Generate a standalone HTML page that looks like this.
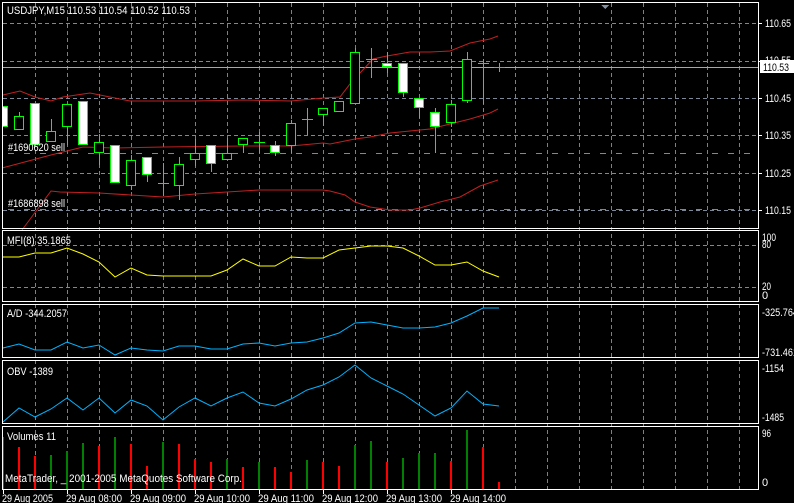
<!DOCTYPE html>
<html><head><meta charset="utf-8"><style>
html,body{margin:0;padding:0;background:#000;width:794px;height:503px;overflow:hidden}
svg{display:block}
text{font-family:"Liberation Sans",sans-serif;font-size:11px;fill:#fff}
</style></head><body>
<svg width="794" height="503" viewBox="0 0 794 503" xmlns="http://www.w3.org/2000/svg" shape-rendering="crispEdges">
<rect width="794" height="503" fill="#000"/>
<g stroke="#808080" stroke-width="1" stroke-dasharray="4,3">
<path d="M35.5 3V489M67.5 3V489M99.5 3V489M131.5 3V489M163.5 3V489M195.5 3V489M227.5 3V489M259.5 3V489M291.5 3V489M323.5 3V489M355.5 3V489M387.5 3V489M419.5 3V489M451.5 3V489M483.5 3V489M515.5 3V489M547.5 3V489M579.5 3V489M611.5 3V489M643.5 3V489M675.5 3V489M707.5 3V489M739.5 3V489"/>
</g>
<g stroke="#7c8898" stroke-dasharray="4,3">
<path d="M3 23.5H758M3 61.5H758M3 98.5H758M3 135.5H758M3 173.5H758M3 210.5H758"/>
<path d="M3 245.5H758M3 287.5H758M3 489.5H758"/>
</g>
<path d="M3 67.5H758" stroke="#a0a8b0"/>
<g stroke="#4caf50" stroke-dasharray="6,10">
<path d="M8 153.5H758M8 209.5H758"/>
</g>
<g fill="none" stroke="#c02020" stroke-width="1" shape-rendering="auto">
<polyline points="3,95 20,91 35,97 51,101 63,97 90,93 130,101 195,101 243,100 291,101 323,98 340,97 350,84 360,73 373,59 387,56 410,52 430,52 450,51 470,43 490,39 498,36"/>
<polyline points="2,168 51,155 83,147 115,148 163,147 243,146 291,146 323,143 330,144 355,139 370,137 390,133 410,131 430,129 450,124 470,119 490,113 498,109"/>
<polyline points="22,230 51,191 60,192 99,193 163,197 195,194 259,190 323,190 330,191 345,195 355,202 370,207 390,210 410,210 420,208 440,202 460,197 480,186 498,180"/>
</g>
<g stroke="#00ff00" stroke-width="1">
<path d="M19.5 112V129M35.5 104V144M51.5 119V141M67.5 104V145M99.5 134V165M131.5 155V190M147.5 157V182M163.5 163V196M179.5 157V200M195.5 139V166M211.5 145V172M227.5 138V158M243.5 138V153M259.5 132V153M275.5 141V156M291.5 120V153M307.5 108V135M323.5 108V126M355.5 48V103M371.5 48V78M387.5 52V73M403.5 63V97M419.5 98V118M435.5 108V153M451.5 100V127M467.5 52V103M483.5 59V104M499.5 63V72"/>
<path d="M158 183.5H169M254 142.5H265M302 119.5H313M366 59.5H377M478 63.5H489M494 67.5H505"/>
<rect x="2.5" y="106.5" width="5" height="20" fill="#fff"/>
<rect x="14.5" y="116.5" width="9" height="13" fill="#000"/>
<rect x="30.5" y="103.5" width="9" height="41" fill="#fff"/>
<rect x="46.5" y="131.5" width="9" height="10" fill="#000"/>
<rect x="62.5" y="104.5" width="9" height="22" fill="#000"/>
<rect x="78.5" y="101.5" width="9" height="43" fill="#fff"/>
<rect x="94.5" y="142.5" width="9" height="10" fill="#000"/>
<rect x="110.5" y="145.5" width="9" height="37" fill="#fff"/>
<rect x="126.5" y="160.5" width="9" height="25" fill="#000"/>
<rect x="142.5" y="157.5" width="9" height="17" fill="#fff"/>
<rect x="174.5" y="164.5" width="9" height="21" fill="#000"/>
<rect x="190.5" y="153.5" width="9" height="6" fill="#000"/>
<rect x="206.5" y="145.5" width="9" height="18" fill="#fff"/>
<rect x="222.5" y="153.5" width="9" height="6" fill="#000"/>
<rect x="238.5" y="138.5" width="9" height="6" fill="#000"/>
<rect x="270.5" y="145.5" width="9" height="7" fill="#fff"/>
<rect x="286.5" y="123.5" width="9" height="22" fill="#000"/>
<rect x="318.5" y="108.5" width="9" height="6" fill="#000"/>
<rect x="334.5" y="101.5" width="9" height="10" fill="#000"/>
<rect x="350.5" y="52.5" width="9" height="51" fill="#000"/>
<rect x="382.5" y="63.5" width="9" height="3" fill="#fff"/>
<rect x="398.5" y="63.5" width="9" height="29" fill="#fff"/>
<rect x="414.5" y="98.5" width="9" height="9" fill="#fff"/>
<rect x="430.5" y="112.5" width="9" height="14" fill="#fff"/>
<rect x="446.5" y="104.5" width="9" height="18" fill="#000"/>
<rect x="462.5" y="59.5" width="9" height="41" fill="#000"/>
</g>
<polyline fill="none" stroke="#ffff00" shape-rendering="auto" points="3,257 19,257 35,253 51,253 67,248 83,254 99,262 115,277 131,268 147,275 163,276 179,276 195,276 211,276 227,270 243,259 259,266 275,266 291,257 307,258 323,258 339,250 355,248 371,246 387,246 403,248 419,256 435,265 451,265 467,262 483,271 499,277"/>
<polyline fill="none" stroke="#00b4ff" shape-rendering="auto" points="3,348 19,344 35,350 51,350 67,342 83,348 99,345 115,355 131,348 147,350 163,351 179,346 195,346 211,349 227,349 243,344 259,343 275,346 291,343 307,342 323,338 339,333 355,323 371,322 387,325 403,328 419,328 435,327 451,323 467,316 483,308 499,308"/>
<polyline fill="none" stroke="#00b4ff" shape-rendering="auto" points="3,422 19,408 35,417 51,409 67,398 83,410 99,398 115,413 131,400 147,406 163,420 179,407 195,398 211,406 227,398 243,392 259,403 275,406 291,399 307,390 323,385 339,377 355,365 371,378 387,386 403,394 419,405 435,416 451,408 467,391 483,404 499,406"/>
<g stroke-width="2">
<path stroke="#ff0000" d="M3 437V489M19 447V489M35 456V489M99 446V489M131 444V489M147 466V489M179 444V489M195 459V489M211 462V489M243 467V489M275 467V489M291 472V489M323 462V489M339 466V489M387 462V489M451 461V489M483 447V489M499 482V489"/>
<path stroke="#008000" d="M51 455V489M67 451V489M83 443V489M115 437V489M163 442V489M227 459V489M259 462V489M307 460V489M355 445V489M371 441V489M403 458V489M419 453V489M435 453V489M467 430V489"/>
</g>
<g fill="none" stroke="#fff" stroke-width="1">
<rect x="2.5" y="2.5" width="756" height="226"/>
<rect x="2.5" y="230.5" width="756" height="71"/>
<rect x="2.5" y="304.5" width="756" height="53"/>
<rect x="2.5" y="360.5" width="756" height="63"/>
<rect x="2.5" y="426.5" width="756" height="63"/>
</g>
<g stroke="#fff">
<path d="M759 23.5H762M759 61.5H762M759 98.5H762M759 135.5H762M759 173.5H762M759 210.5H762"/>
<path d="M3.5 490V494M67.5 490V494M131.5 490V494M195.5 490V494M259.5 490V494M323.5 490V494M387.5 490V494M451.5 490V494"/>
</g>
<path d="M601 5H609L605 9Z" fill="#8090a0"/>
<text x="7" y="14" textLength="183" lengthAdjust="spacingAndGlyphs">USDJPY,M15  110.53 110.54 110.52 110.53</text>
<text x="8" y="151" textLength="57" lengthAdjust="spacingAndGlyphs">#1690620 sell</text>
<text x="8" y="207" textLength="57" lengthAdjust="spacingAndGlyphs">#1686898 sell</text>
<text x="7" y="244" textLength="64" lengthAdjust="spacingAndGlyphs">MFI(8) 35.1865</text>
<text x="7" y="317" textLength="60" lengthAdjust="spacingAndGlyphs">A/D -344.2057</text>
<text x="7" y="375" textLength="46" lengthAdjust="spacingAndGlyphs">OBV -1389</text>
<text x="7" y="440" textLength="49" lengthAdjust="spacingAndGlyphs">Volumes 11</text>
<text x="5" y="482" textLength="237" lengthAdjust="spacingAndGlyphs">MetaTrader, _ 2001-2005 MetaQuotes Software Corp.</text>
<g>
<text x="765" y="27" textLength="26" lengthAdjust="spacingAndGlyphs">110.65</text>
<text x="765" y="64" textLength="26" lengthAdjust="spacingAndGlyphs">110.55</text>
<rect x="760" y="60" width="34" height="13" fill="#fff"/>
<text x="763" y="71" style="fill:#000" textLength="26" lengthAdjust="spacingAndGlyphs">110.53</text>
<text x="765" y="102" textLength="26" lengthAdjust="spacingAndGlyphs">110.45</text>
<text x="765" y="139" textLength="26" lengthAdjust="spacingAndGlyphs">110.35</text>
<text x="765" y="177" textLength="26" lengthAdjust="spacingAndGlyphs">110.25</text>
<text x="765" y="214" textLength="26" lengthAdjust="spacingAndGlyphs">110.15</text>
<text x="762" y="241" textLength="14" lengthAdjust="spacingAndGlyphs">100</text>
<text x="762" y="248" textLength="9" lengthAdjust="spacingAndGlyphs">80</text>
<text x="762" y="290" textLength="9" lengthAdjust="spacingAndGlyphs">20</text>
<text x="762" y="299">0</text>
<text x="762" y="316" textLength="36" lengthAdjust="spacingAndGlyphs">-325.764</text>
<text x="762" y="356" textLength="36" lengthAdjust="spacingAndGlyphs">-731.461</text>
<text x="762" y="372" textLength="22" lengthAdjust="spacingAndGlyphs">-1154</text>
<text x="762" y="421" textLength="22" lengthAdjust="spacingAndGlyphs">-1485</text>
<text x="762" y="437" textLength="9" lengthAdjust="spacingAndGlyphs">96</text>
<text x="762" y="486">0</text>
</g>
<g>
<text x="2" y="502" textLength="51" lengthAdjust="spacingAndGlyphs">29 Aug 2005</text>
<text x="66" y="502" textLength="56" lengthAdjust="spacingAndGlyphs">29 Aug 08:00</text>
<text x="130" y="502" textLength="56" lengthAdjust="spacingAndGlyphs">29 Aug 09:00</text>
<text x="194" y="502" textLength="56" lengthAdjust="spacingAndGlyphs">29 Aug 10:00</text>
<text x="258" y="502" textLength="56" lengthAdjust="spacingAndGlyphs">29 Aug 11:00</text>
<text x="322" y="502" textLength="56" lengthAdjust="spacingAndGlyphs">29 Aug 12:00</text>
<text x="386" y="502" textLength="56" lengthAdjust="spacingAndGlyphs">29 Aug 13:00</text>
<text x="450" y="502" textLength="56" lengthAdjust="spacingAndGlyphs">29 Aug 14:00</text>
</g>
</svg>
</body></html>
